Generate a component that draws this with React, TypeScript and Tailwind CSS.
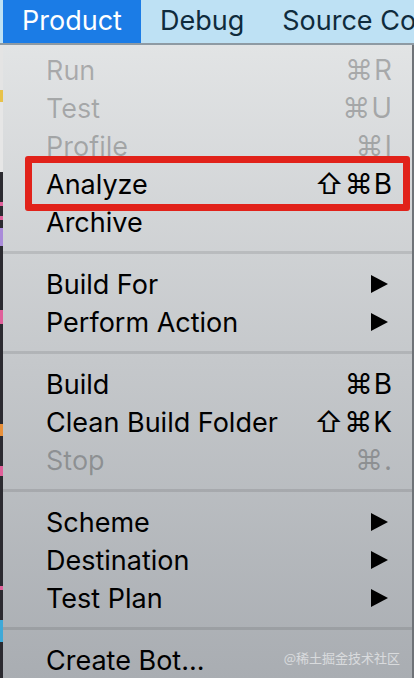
import { Fragment } from 'react'

type Item = {
  label: string
  shortcut?: string
  disabled?: boolean
  submenu?: boolean
}

const groups: Item[][] = [
  [
    { label: 'Run', shortcut: '⌘R', disabled: true },
    { label: 'Test', shortcut: '⌘U', disabled: true },
    { label: 'Profile', shortcut: '⌘I', disabled: true },
    { label: 'Analyze', shortcut: '⇧⌘B' },
    { label: 'Archive' },
  ],
  [
    { label: 'Build For', submenu: true },
    { label: 'Perform Action', submenu: true },
  ],
  [
    { label: 'Build', shortcut: '⌘B' },
    { label: 'Clean Build Folder', shortcut: '⇧⌘K' },
    { label: 'Stop', shortcut: '⌘.', disabled: true },
  ],
  [
    { label: 'Scheme', submenu: true },
    { label: 'Destination', submenu: true },
    { label: 'Test Plan', submenu: true },
  ],
  [{ label: 'Create Bot...' }],
]

function Row({ item }: { item: Item }) {
  const tone = item.disabled ? 'text-black/25' : 'text-black'
  return (
    <div className={`h-[38px] flex items-center justify-between pl-[43px] pr-[19px] ${tone}`}>
      <span className="text-[27px] leading-none">{item.label}</span>
      {item.shortcut && (
        <span className="text-[28px] leading-none tracking-[1px]">{item.shortcut}</span>
      )}
      {item.submenu && (
        <svg width="17" height="18" viewBox="0 0 17 18" className="mr-[5px]">
          <polygon points="0,0 17,9 0,18" fill="#000" />
        </svg>
      )}
    </div>
  )
}

export default function App() {
  return (
    <div className="relative w-[414px] h-[678px] overflow-hidden bg-[#2b2a30] font-['Inter','DejaVu_Sans',sans-serif]">
      {/* menu bar */}
      <div className="h-[43px] flex overflow-hidden bg-[#bee1f4] pl-[3px] text-[27px] text-[#0f2b3c]">
        <div className="px-[19px] flex items-center bg-[#1b7ce6] text-white">Product</div>
        <div className="px-[19px] flex items-center">Debug</div>
        <div className="pl-[19px] flex items-center whitespace-nowrap">Source Co</div>
      </div>
      <div className="h-[2px] bg-[#8e9aa3]" />

      <div className="flex h-[633px]">
        {/* window behind the menu */}
        <div className="w-[3px] flex flex-col">
          <div className="h-[45px] bg-[#e4e4e4]" />
          <div className="h-[12px] bg-[#e8c24a]" />
          <div className="h-[70px] bg-[#e6e6e6]" />
          <div className="h-[30px]" />
          <div className="h-[4px] bg-[#e0609a]" />
          <div className="h-[10px]" />
          <div className="h-[4px] bg-[#e0609a]" />
          <div className="h-[8px]" />
          <div className="h-[18px] bg-[#a98bd9]" />
          <div className="h-[64px]" />
          <div className="h-[14px] bg-[#e0609a]" />
          <div className="h-[100px]" />
          <div className="h-[12px] bg-[#e8903a]" />
          <div className="h-[30px]" />
          <div className="h-[10px] bg-[#e0609a]" />
          <div className="h-[110px]" />
          <div className="h-[4px] bg-[#e0609a]" />
          <div className="h-[30px]" />
          <div className="h-[22px] bg-[#3fa9d8]" />
        </div>

        {/* dropdown */}
        <div className="w-[409px] pt-[6px] bg-gradient-to-b from-[#e2e4e5] via-[#c5c8cb] to-[#a9adb2]">
          {groups.map((group, gi) => (
            <Fragment key={gi}>
              {gi > 0 && <div className="mt-[10px] mb-[11px] h-[3px] bg-black/10" />}
              {group.map((item) => (
                <Row key={item.label} item={item} />
              ))}
            </Fragment>
          ))}
        </div>
        <div className="w-[2px] bg-[#6f7378]" />
      </div>

      {/* annotation */}
      <div className="absolute left-[25px] top-[156px] w-[385px] h-[55px] border-[7px] border-[#e1221a] rounded-[3px]" />

      <div className="absolute right-[14px] top-[651px] text-[13px] leading-none text-white/55 font-['Noto_Sans_CJK_SC',sans-serif]">
        @稀土掘金技术社区
      </div>
    </div>
  )
}
